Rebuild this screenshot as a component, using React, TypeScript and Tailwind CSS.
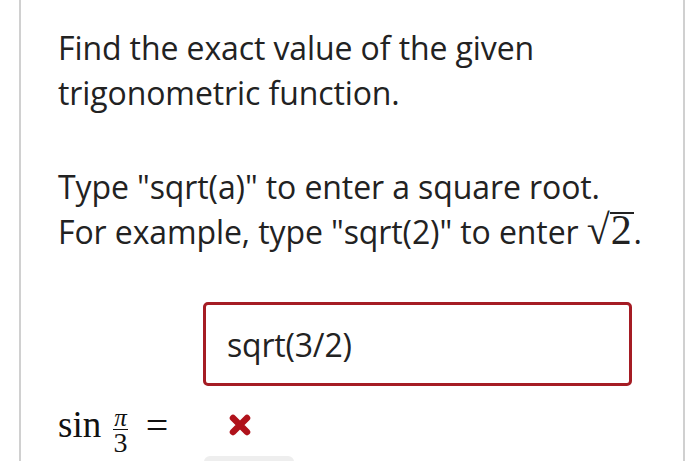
export default function App() {
  return (
    <div className="w-[700px] h-[461px] overflow-hidden bg-white">
      <div className="ml-[19px] w-[666px] h-[461px] border-x-2 border-[#d0d0d0] pl-[37px] pt-[25px] text-[#222] [font-family:'Open_Sans',sans-serif]">
        <p className="text-[32px] leading-[45px] tracking-[-0.1px]">
          Find the exact value of the given
          <br />
          trigonometric function.
        </p>
        <p className="mt-[49px] text-[32px] leading-[45px] tracking-[-0.1px]">
          Type "sqrt(a)" to enter a square root.
          <br />
          For example, type "sqrt(2)" to enter{' '}
          <span className="[font-family:'Liberation_Serif',serif] text-[42px] leading-[34px]">
            √<span className="inline-block border-t-[2px] border-[#222] leading-[33px] pl-[1px] pr-[2px]">2</span>
          </span>
          .
        </p>
        <div className="mt-[48px] ml-[145px] w-[429px] h-[84px] rounded-[5px] border-[3px] border-[#a51c24] flex items-center pl-[21px] pt-[2px] text-[32px] tracking-[-0.2px]">
          sqrt(3/2)
        </div>
        <div className="mt-[20px] flex items-start h-[50px] [font-family:'Liberation_Serif',serif] text-[#111]">
          <span className="text-[37px] leading-[37px]">sin</span>
          <span className="ml-[12px] mt-[3px] flex flex-col items-center">
            <span className="italic text-[25px] leading-[18px] border-b border-[#111] px-[1px] pb-[2px]">π</span>
            <span className="text-[28px] leading-[24px] pt-[1px]">3</span>
          </span>
          <span className="ml-[18px] text-[40px] leading-[40px]">=</span>
          <svg className="ml-[60px] mt-[7px]" width="24" height="24" viewBox="0 0 24 24">
            <path d="M5 5 L19 19 M19 5 L5 19" stroke="#b0121b" strokeWidth="6.5" strokeLinecap="round" />
          </svg>
        </div>
        <div className="ml-[146px] w-[90px] h-[20px] rounded-t-[6px] bg-[#eeeeee]" />
      </div>
    </div>
  );
}
